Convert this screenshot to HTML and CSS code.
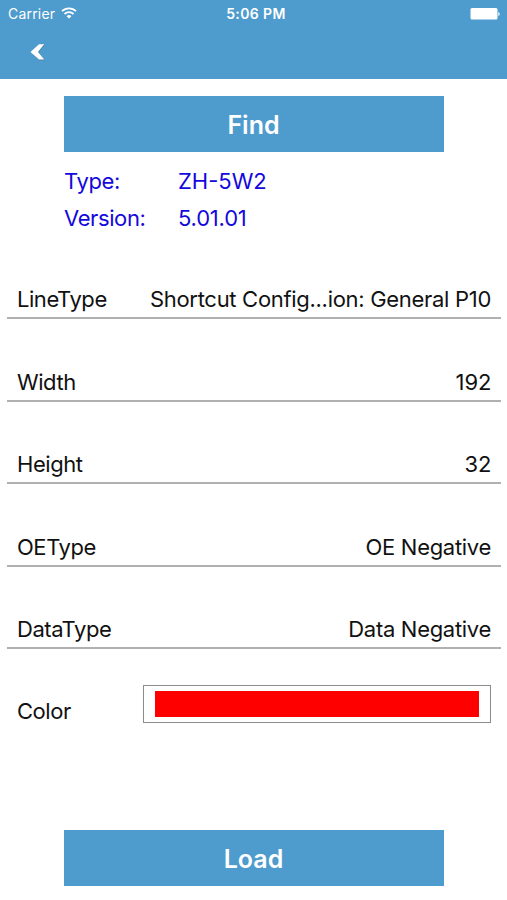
FILE: index.html
```html
<!DOCTYPE html>
<html lang="en">
<head>
    <meta charset="UTF-8">
    <meta name="viewport" content="width=device-width, initial-scale=1.0">
    <title>Panel Settings</title>
    <link rel="stylesheet" href="styles.css">
</head>
<body>
    <header class="top-bar">
        <div class="status">
            <div class="carrier">
                <span class="carrier-name">Carrier</span>
                <svg viewBox="0 0 16 12" width="16" height="12">
                    <path d="M1 4.2a10 10 0 0 1 14 0M3.5 7a6.3 6.3 0 0 1 9 0" fill="none" stroke="#fff" stroke-width="1.8"/>
                    <path d="M5.6 9.2a3.5 3.5 0 0 1 4.8 0L8 11.6z" fill="#fff"/>
                </svg>
            </div>
            <span class="time">5:06 PM</span>
            <svg class="battery" viewBox="0 0 31 12" width="31" height="12">
                <rect x="0.5" y="0" width="27" height="11.6" rx="1.5" fill="#fff"/>
                <path d="M28.3 4v4a2.4 2.2 0 0 0 0-4z" fill="#fff"/>
            </svg>
        </div>
        <a class="back" href="#">
            <svg viewBox="0 0 16 18" width="16" height="18">
                <path d="M1.3 9.7L9.5 2h5L8.4 9.7l6.1 7.5h-5z" fill="#4a7a9a"/>
                <path d="M.5 9L9 1.2h5.2L8 9l6.2 7.4H9z" fill="#fff"/>
            </svg>
        </a>
    </header>

    <main>
        <button class="btn" type="button">Find</button>

        <div class="info">
            <span class="info-label">Type:</span><span>ZH-5W2</span>
            <span class="info-label">Version:</span><span class="version">5.01.01</span>
        </div>

        <div class="settings">
            <div class="row"><span class="label">LineType</span><span class="value">Shortcut Config...ion: General P10</span></div>
            <div class="row"><span class="label">Width</span><span class="number">192</span></div>
            <div class="row"><span class="label">Height</span><span class="number">32</span></div>
            <div class="row"><span class="label">OEType</span><span class="value">OE Negative</span></div>
            <div class="row"><span class="label">DataType</span><span class="value">Data Negative</span></div>
            <div class="row color-row"><span class="label">Color</span><div class="color-box"><div class="swatch"></div></div></div>
        </div>

        <button class="btn load-btn" type="button">Load</button>
    </main>
</body>
</html>
```
FILE: styles.css
```css
* {
    box-sizing: border-box;
}

body {
    margin: 0;
    height: 900px;
    overflow: hidden;
    background-color: #fff;
    color: #111;
    font-family: Inter, "Liberation Sans", sans-serif;
    font-size: 22px;
}

.top-bar {
    height: 79px;
    background-color: #4e9bcd;
    color: #fff;
}

.status {
    display: grid;
    grid-template-columns: 1fr auto 1fr;
    align-items: center;
    height: 27px;
    padding: 0 6px 0 8px;
    font-size: 14px;
}

.carrier {
    display: flex;
    align-items: center;
    gap: 6px;
}

.carrier-name {
    letter-spacing: 0.2px;
}

.carrier svg {
    margin-top: -2px;
}

.time {
    padding-left: 3px;
    font-weight: 600;
    letter-spacing: 0.4px;
}

.battery {
    justify-self: end;
}

.back {
    display: block;
    width: 16px;
    height: 18px;
    margin: 16px 0 0 30px;
}

.back svg {
    display: block;
}

.btn {
    display: block;
    width: 380px;
    height: 56px;
    margin: 17px 0 0 64px;
    padding: 1px 1px 0 0;
    border: none;
    background-color: #4e9bcd;
    color: #fff;
    font-family: inherit;
    font-size: 25px;
    font-weight: 600;
    line-height: 56px;
}

.info {
    display: grid;
    grid-template-columns: 114px 1fr;
    grid-auto-rows: 37px;
    align-items: center;
    margin: 10px 0 0 64px;
    color: #1408dc;
}

.info-label {
    letter-spacing: -0.4px;
}

.version {
    letter-spacing: -0.2px;
}

.settings {
    margin: 0 6px 0 7px;
    padding-top: 1px;
}

.row {
    display: flex;
    justify-content: space-between;
    align-items: flex-end;
    height: 82.4px;
    padding: 0 10px 5px;
    border-bottom: 2px solid #b0b0b0;
    white-space: nowrap;
}

.label {
    letter-spacing: -0.45px;
}

.value {
    letter-spacing: -0.3px;
}

.number {
    margin-right: -0.5px;
}

.color-row {
    padding-bottom: 7px;
    border-bottom: none;
}

.color-box {
    width: 348px;
    height: 38px;
    margin-bottom: 1px;
    padding: 5px 11px;
    border: 1px solid #8c8c8c;
}

.swatch {
    height: 26px;
    background-color: #f00;
}

.load-btn {
    margin-top: 99px;
}
```
